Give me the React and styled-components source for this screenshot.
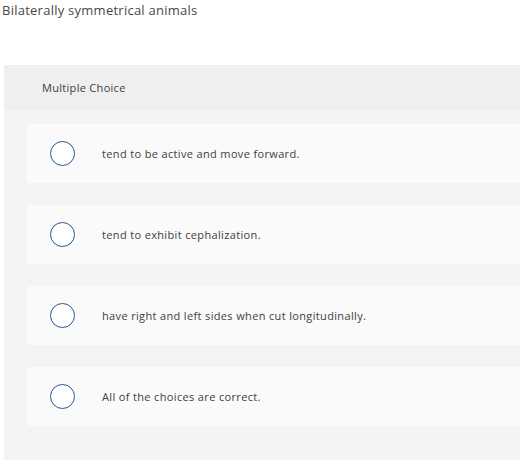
import React from "react";
import styled, { createGlobalStyle } from "styled-components";

const GlobalStyle = createGlobalStyle`
  body {
    margin: 0;
    background: #ffffff;
    font-family: "Open Sans", Lato, sans-serif;
  }
`;

const Page = styled.div`
  width: 520px;
  height: 460px;
  overflow: hidden;
`;

const Prompt = styled.div`
  padding: 1px 0 0 2px;
  font-size: 13px;
  line-height: 18px;
  letter-spacing: 0.25px;
  color: #474747;
`;

const Panel = styled.div`
  margin: 46px 0 0 4px;
  background: #f4f4f4;
  height: 400px;
`;

const PanelHeader = styled.div`
  height: 45px;
  background: #efefef;
  display: flex;
  align-items: center;
  padding-left: 38px;
  font-size: 11px;
  letter-spacing: 0.3px;
  color: #404040;
`;

const Options = styled.div`
  display: flex;
  flex-direction: column;
  gap: 22px;
  padding: 14px 0 0 23px;
`;

const OptionCard = styled.div`
  height: 59px;
  background: #fafafa;
  border-radius: 3px 0 0 3px;
  display: flex;
  align-items: center;
  padding-left: 23px;
  gap: 27px;
`;

const Radio = styled.span`
  box-sizing: border-box;
  width: 25px;
  height: 25px;
  border-radius: 50%;
  border: 1.5px solid #255894;
  background: #ffffff;
  flex-shrink: 0;
`;

const OptionText = styled.span`
  font-size: 11px;
  letter-spacing: 0.35px;
  color: #404040;
`;

const choices = [
  "tend to be active and move forward.",
  "tend to exhibit cephalization.",
  "have right and left sides when cut longitudinally.",
  "All of the choices are correct.",
];

export default function App() {
  return (
    <Page>
      <GlobalStyle />
      <Prompt>Bilaterally symmetrical animals</Prompt>
      <Panel>
        <PanelHeader>Multiple Choice</PanelHeader>
        <Options>
          {choices.map((c) => (
            <OptionCard key={c}>
              <Radio />
              <OptionText>{c}</OptionText>
            </OptionCard>
          ))}
        </Options>
      </Panel>
    </Page>
  );
}
